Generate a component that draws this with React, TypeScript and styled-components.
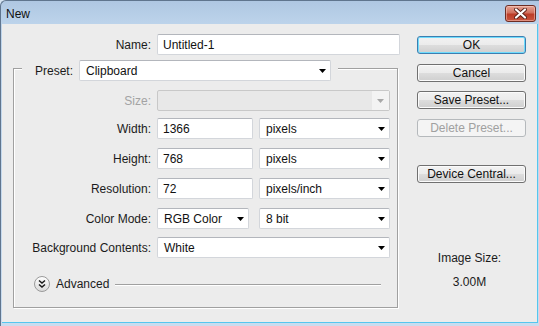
import React from 'react';
import styled, { createGlobalStyle } from 'styled-components';

const GlobalStyle = createGlobalStyle`
  html, body {
    margin: 0;
    padding: 0;
    background: #d6e4f2;
  }
  body {
    font-family: "Liberation Sans", Arial, sans-serif;
    font-size: 12px;
    color: #1b1b1b;
  }
`;

const Window = styled.div`
  width: 539px;
  height: 326px;
  box-sizing: border-box;
  display: flex;
  flex-direction: column;
  background: linear-gradient(#afc7e2, #bdd4eb 24px, #c9dcef);
  border-top: 1px solid #60758e;
  border-left: 1px solid #60758e;
  border-top-left-radius: 6px;
  overflow: hidden;
`;

const TitleBar = styled.div`
  height: 23px;
  display: flex;
  align-items: center;
  justify-content: space-between;
  padding: 0 3px 0 5px;
`;

const Title = styled.span`
  font-size: 12px;
  color: #111;
  padding-top: 2px;
`;

const CloseButton = styled.div`
  width: 31px;
  height: 17px;
  box-sizing: border-box;
  margin-top: 1px;
  border: 1px solid #6d2d24;
  border-radius: 3px;
  background: linear-gradient(#e6a495, #d0705d 45%, #bc3c27 55%, #c9553e);
  box-shadow: inset 0 0 0 1px rgba(255, 220, 210, 0.45);
  display: flex;
  align-items: center;
  justify-content: center;
`;

const Client = styled.div`
  flex: 1;
  display: flex;
  margin: 0 1px 3px 1px;
  background: #ececec;
  border-right: 1px solid #55c6ee;
  border-bottom: 1px solid #55c6ee;
`;

const LeftColumn = styled.div`
  width: 398px;
  padding: 10px 0 0 11px;
  box-sizing: border-box;
`;

const Row = styled.div<{ $shift?: number }>`
  display: flex;
  align-items: center;
  height: 21px;
  margin-top: ${(p) => p.$shift ?? 0}px;
`;

const Label = styled.span<{ $w: number; $disabled?: boolean }>`
  width: ${(p) => p.$w}px;
  text-align: right;
  margin-right: 6px;
  color: ${(p) => (p.$disabled ? '#a3a3a3' : '#1b1b1b')};
  white-space: nowrap;
`;

const TextField = styled.div<{ $w: number }>`
  width: ${(p) => p.$w}px;
  height: 21px;
  box-sizing: border-box;
  border: 1px solid #d3d6db;
  border-top-color: #b3b6bc;
  border-radius: 2px;
  background: #fff;
  padding-left: 5px;
  display: flex;
  align-items: center;
  color: #111;
`;

const SelectBox = styled.div<{ $w: number; $gapLeft?: number }>`
  width: ${(p) => p.$w}px;
  height: 21px;
  margin-left: ${(p) => p.$gapLeft ?? 0}px;
  box-sizing: border-box;
  border: 1px solid #d3d6db;
  border-top-color: #b3b6bc;
  border-radius: 2px;
  background: #fff;
  padding: 0 4px 0 6px;
  display: flex;
  align-items: center;
  justify-content: space-between;
  color: #111;
`;

const DisabledSelect = styled.div<{ $w: number }>`
  width: ${(p) => p.$w}px;
  height: 21px;
  box-sizing: border-box;
  border: 1px solid #c8c8c8;
  border-radius: 2px;
  background: #e8e8e8;
  display: flex;
  justify-content: flex-end;
`;

const DisabledArrowBox = styled.div`
  width: 17px;
  background: #f3f3f3;
  display: flex;
  align-items: center;
  justify-content: center;
`;

const Group = styled.fieldset`
  width: 385px;
  box-sizing: border-box;
  margin: 1px 0 0 0;
  padding: 9px 0 15px 0;
  border: 1px solid #a0a0a0;
  box-shadow: inset 1px 1px 0 #fff, 1px 1px 0 #fff;
  min-width: 0;
`;

const Legend = styled.legend`
  margin-left: 8px;
  padding: 4px 7px 0 13px;
  background: #ececec;
  display: flex;
  align-items: center;
`;

const Rows = styled.div`
  display: flex;
  flex-direction: column;
  gap: 9px;
`;

const AdvancedRow = styled.div`
  display: flex;
  align-items: center;
  height: 16px;
  margin: 18px 16px 0 20px;
`;

const AdvancedText = styled.span`
  margin: 0 6px 0 6px;
`;

const Rule = styled.div`
  flex: 1;
  height: 1px;
  background: #a0a0a0;
  box-shadow: 0 1px 0 #fff;
`;

const RightColumn = styled.div`
  width: 109px;
  margin-left: 17px;
  padding-top: 12px;
  display: flex;
  flex-direction: column;
`;

const Button = styled.div<{ $primary?: boolean; $disabled?: boolean; $top?: number }>`
  height: 18px;
  box-sizing: border-box;
  margin-top: ${(p) => p.$top ?? 10}px;
  border: 1px solid ${(p) => (p.$primary ? '#3c7fb1' : p.$disabled ? '#b5b9bc' : '#707070')};
  border-radius: 3px;
  background: ${(p) =>
    p.$disabled
      ? '#f4f4f4'
      : 'linear-gradient(#f2f2f2, #ebebeb 50%, #dddddd 51%, #cfcfcf)'};
  box-shadow: ${(p) =>
    p.$primary ? 'inset 0 0 0 1px #6fdcfd' : p.$disabled ? 'none' : 'inset 0 0 0 1px #fbfbfb'};
  color: ${(p) => (p.$disabled ? '#a0a0a0' : '#111')};
  display: flex;
  align-items: center;
  justify-content: center;
  white-space: nowrap;
`;

const ImageSize = styled.div`
  margin-top: 68px;
  display: flex;
  flex-direction: column;
  align-items: center;
  gap: 10px;
  padding-right: 4px;
`;

const Caret: React.FC<{ color?: string }> = ({ color = '#000' }) => (
  <svg width="7" height="4" viewBox="0 0 7 4">
    <polygon points="0,0 7,0 3.5,4" fill={color} />
  </svg>
);

const Select: React.FC<{ w: number; gapLeft?: number; children?: React.ReactNode }> = ({
  w,
  gapLeft,
  children,
}) => (
  <SelectBox $w={w} $gapLeft={gapLeft}>
    <span>{children}</span>
    <Caret />
  </SelectBox>
);

const AdvancedIcon = () => (
  <svg width="16" height="16" viewBox="0 0 16 16">
    <defs>
      <linearGradient id="adv" x1="0" y1="0" x2="0" y2="1">
        <stop offset="0" stopColor="#ffffff" />
        <stop offset="1" stopColor="#d9d9d9" />
      </linearGradient>
    </defs>
    <circle cx="8" cy="8" r="7.5" fill="url(#adv)" stroke="#9a9a9a" />
    <polyline points="5,4.5 8,7 11,4.5" fill="none" stroke="#1a1a1a" strokeWidth="1.5" />
    <polyline points="5,8.5 8,11 11,8.5" fill="none" stroke="#1a1a1a" strokeWidth="1.5" />
  </svg>
);

const CloseIcon = () => (
  <svg width="13" height="11" viewBox="0 0 13 11">
    <path d="M2 1.5 L11 9.5 M11 1.5 L2 9.5" stroke="#5a2219" strokeWidth="4" strokeLinecap="round" />
    <path d="M2 1.5 L11 9.5 M11 1.5 L2 9.5" stroke="#ffffff" strokeWidth="2.2" strokeLinecap="round" />
  </svg>
);

const App: React.FC = () => {
  return (
    <>
      <GlobalStyle />
      <Window>
        <TitleBar>
          <Title>New</Title>
          <CloseButton>
            <CloseIcon />
          </CloseButton>
        </TitleBar>
        <Client>
          <LeftColumn>
            <Row>
              <Label $w={138}>Name:</Label>
              <TextField $w={243}>Untitled-1</TextField>
            </Row>
            <Group>
              <Legend>
                <Label $w={38}>Preset:</Label>
                <Select w={252}>Clipboard</Select>
              </Legend>
              <Rows>
                <Row>
                  <Label $w={137} $disabled>Size:</Label>
                  <DisabledSelect $w={233}>
                    <DisabledArrowBox>
                      <Caret color="#a8a8a8" />
                    </DisabledArrowBox>
                  </DisabledSelect>
                </Row>
                <Row $shift={-2}>
                  <Label $w={137}>Width:</Label>
                  <TextField $w={96}>1366</TextField>
                  <Select w={131} gapLeft={6}>pixels</Select>
                </Row>
                <Row>
                  <Label $w={137}>Height:</Label>
                  <TextField $w={96}>768</TextField>
                  <Select w={131} gapLeft={6}>pixels</Select>
                </Row>
                <Row>
                  <Label $w={137}>Resolution:</Label>
                  <TextField $w={96}>72</TextField>
                  <Select w={131} gapLeft={6}>pixels/inch</Select>
                </Row>
                <Row>
                  <Label $w={137}>Color Mode:</Label>
                  <Select w={92}>RGB Color</Select>
                  <Select w={131} gapLeft={10}>8 bit</Select>
                </Row>
                <Row $shift={-1}>
                  <Label $w={137}>Background Contents:</Label>
                  <Select w={233}>White</Select>
                </Row>
              </Rows>
              <AdvancedRow>
                <AdvancedIcon />
                <AdvancedText>Advanced</AdvancedText>
                <Rule />
              </AdvancedRow>
            </Group>
          </LeftColumn>
          <RightColumn>
            <Button $primary $top={0}>OK</Button>
            <Button>Cancel</Button>
            <Button $top={9}>Save Preset...</Button>
            <Button $disabled>Delete Preset...</Button>
            <Button $top={28}>Device Central...</Button>
            <ImageSize>
              <span>Image Size:</span>
              <span>3.00M</span>
            </ImageSize>
          </RightColumn>
        </Client>
      </Window>
    </>
  );
};

export default App;
